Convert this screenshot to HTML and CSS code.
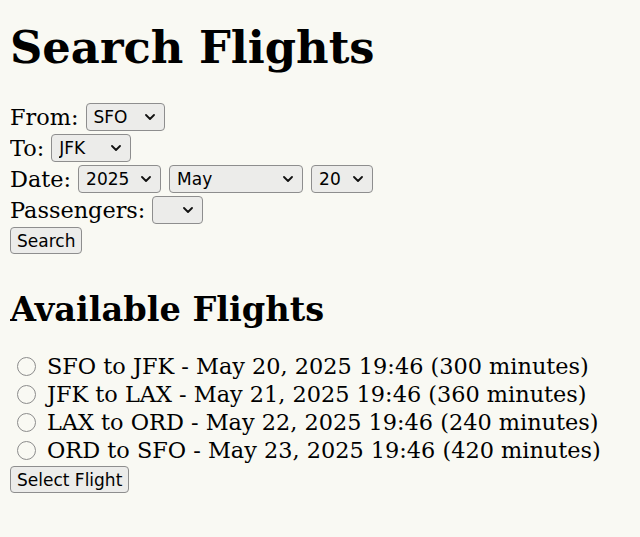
FILE: index.html
```html
<!DOCTYPE html>
<html>
<head>
<meta charset="utf-8">
<title>Search Flights</title>
<link rel="stylesheet" href="styles.css">
</head>
<body>
<h1>Search Flights</h1>
<form class="search">
  <div class="row"><label for="from">From:</label>
    <select id="from" class="sel sel-from"><option>SFO</option><option>JFK</option><option>LAX</option><option>ORD</option></select>
  </div>
  <div class="row"><label for="to">To:</label>
    <select id="to" class="sel sel-to"><option>JFK</option><option>SFO</option><option>LAX</option><option>ORD</option></select>
  </div>
  <div class="row"><label for="year">Date:</label>
    <select id="year" class="sel sel-year"><option>2025</option><option>2026</option></select>
    <select class="sel sel-month"><option>May</option><option>January</option><option>September</option><option>December</option></select>
    <select class="sel sel-day"><option>20</option><option>21</option><option>22</option></select>
  </div>
  <div class="row"><label for="pax">Passengers:</label>
    <select id="pax" class="sel sel-pax"></select>
  </div>
  <div class="row"><button type="button" class="btn">Search</button></div>
</form>
<h2>Available Flights</h2>
<form class="flights">
  <div class="flight"><input type="radio" name="f" id="f1" class="radio"><label for="f1">SFO to JFK - May 20, 2025 19:46 (300 minutes)</label></div>
  <div class="flight"><input type="radio" name="f" id="f2" class="radio"><label for="f2">JFK to LAX - May 21, 2025 19:46 (360 minutes)</label></div>
  <div class="flight"><input type="radio" name="f" id="f3" class="radio"><label for="f3">LAX to ORD - May 22, 2025 19:46 (240 minutes)</label></div>
  <div class="flight"><input type="radio" name="f" id="f4" class="radio"><label for="f4">ORD to SFO - May 23, 2025 19:46 (420 minutes)</label></div>
  <div class="row"><button type="button" class="btn">Select Flight</button></div>
</form>
</body>
</html>
```
FILE: styles.css
```css
html {
  background: #f9f9f3;
}
body {
  margin: 8px 10px;
  font-family: "DejaVu Serif", serif;
  font-size: 22.4px;
  color: #000;
}
h1 {
  font-size: 44.8px;
  font-weight: bold;
  margin: 13px 0 27px;
}
h2 {
  font-size: 33.6px;
  font-weight: bold;
  margin: 33px 0 23px;
}
form {
  margin: 0;
}
.row {
  display: flex;
  align-items: center;
  height: 31px;
}
.row label {
  margin-right: 7px;
}
.sel + .sel {
  margin-left: 8px;
}
.sel,
.btn {
  font-family: "DejaVu Sans", sans-serif;
  font-size: 17px;
  color: #000;
  background-color: #ececea;
  border: 1px solid #8e8e8e;
  border-radius: 4px;
}
.sel {
  appearance: none;
  -webkit-appearance: none;
  height: 28px;
  padding: 0 0 0 7px;
  background-image: url("data:image/svg+xml;utf8,<svg xmlns='http://www.w3.org/2000/svg' width='10' height='6' viewBox='0 0 10 6'><path d='M1 1 L5 5 L9 1' fill='none' stroke='%23111' stroke-width='1.8' stroke-linecap='round' stroke-linejoin='round'/></svg>");
  background-repeat: no-repeat;
  background-position: right 9px center;
  background-size: 10px 6px;
}
.sel-from { width: 79px; }
.sel-to { width: 80px; }
.sel-year { width: 83px; }
.sel-month { width: 134px; }
.sel-day { width: 62px; }
.sel-pax { width: 51px; }
.btn {
  height: 27px;
  padding: 0 6px;
  margin: 0;
}
.flight {
  display: flex;
  align-items: center;
  height: 28px;
}
.radio {
  appearance: none;
  -webkit-appearance: none;
  width: 19px;
  height: 19px;
  margin: 0 11px 0 7px;
  border: 1.5px solid #8c8c8c;
  border-radius: 50%;
  background: transparent;
  flex: none;
}
```
